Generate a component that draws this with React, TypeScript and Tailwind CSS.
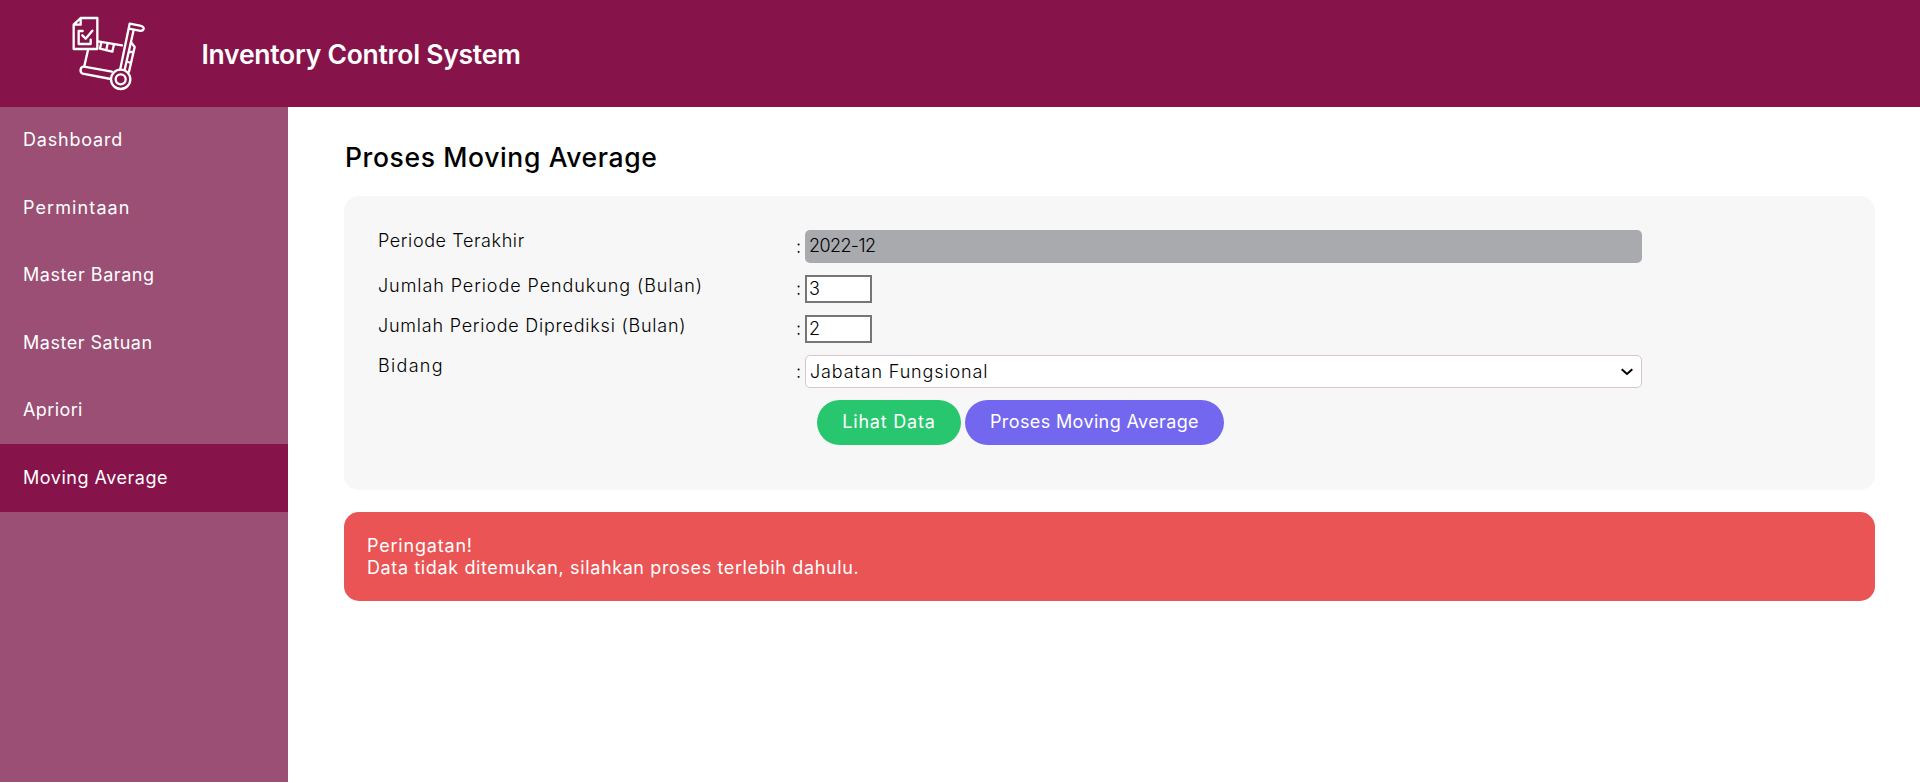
import type { ReactNode } from "react";

const menu = [
  { label: "Dashboard", spacing: "tracking-[0.8px]" },
  { label: "Permintaan", spacing: "tracking-[1.1px]" },
  { label: "Master Barang", spacing: "tracking-[0.56px]" },
  { label: "Master Satuan", spacing: "tracking-[0.52px]" },
  { label: "Apriori", spacing: "tracking-[0.4px]" },
  { label: "Moving Average", spacing: "tracking-[0.52px]", active: true },
];

function TrolleyLogo() {
  return (
    <svg
      viewBox="0 0 300 300"
      className="h-[100px] w-[100px]"
      fill="none"
      stroke="white"
      strokeWidth="7"
      strokeLinejoin="round"
      strokeLinecap="round"
    >
      <path d="M62 39H112V132H41V59ZM41 59H62V39" />
      <path d="M68 78H56V117H92V104M67 91L77 101L97 77" />
      <path d="M114 109L186 121M84 135L73 183" />
      <path d="M124 112L120 131L157 140L162 118M143 115L139 135" />
      <path d="M181 191L209 56L240 62Q253 65 251 72Q248 79 238 77L206 71" />
      <path d="M221 75L194 194" />
      <path d="M213 112L224 126L207 200M209 141H220M204 171L213 174" />
      <path d="M156 200L72 185Q64 184 62 193Q60 203 68 206L152 222" />
      <circle cx="182" cy="223" r="29" />
      <circle cx="182" cy="223" r="15" />
    </svg>
  );
}

function Row({ label, spacing, height, colonTop, children }: {
  label: string; spacing: string; height: string; colonTop: string; children: ReactNode;
}) {
  return (
    <div className={`flex items-start ${height}`}>
      <div className={`w-[418px] whitespace-nowrap font-light ${spacing}`}>{label}</div>
      <div className={`w-[9px] font-light ${colonTop}`}>:</div>
      {children}
    </div>
  );
}

export default function App() {
  return (
    <div className="flex h-[783px] flex-col overflow-hidden bg-white font-['Inter',sans-serif] text-[18px] leading-[22px] text-black">
      <header className="flex h-[107px] shrink-0 items-start bg-[#86134a] pl-[60px] pt-[5px] text-white">
        <TrolleyLogo />
        <h1 className="ml-[41.5px] mt-[33px] whitespace-nowrap text-[26.5px] font-semibold leading-8 tracking-[-0.26px]">
          Inventory Control System
        </h1>
      </header>

      <div className="flex min-h-0 flex-1">
        <nav className="mb-px w-72 shrink-0 bg-[#9b4f74] text-white">
          {menu.map((m) => (
            <a
              key={m.label}
              className={`flex h-[67.47px] items-center pb-px pl-[23px] ${m.spacing} ${m.active ? "bg-[#86134a]" : ""}`}
            >
              {m.label}
            </a>
          ))}
        </nav>

        <main className="min-w-0 flex-1 pl-14 pr-[45px] pt-[33px]">
          <h2 className="pl-px text-[26.5px] font-medium leading-[34px] tracking-[0.62px]">Proses Moving Average</h2>

          <section className="mt-[22px] h-[294px] rounded-[15px] bg-[#f7f7f7] pl-[34px] pt-[34px]">
            <Row label="Periode Terakhir" spacing="tracking-[0.6px]" height="h-[45px]" colonTop="pt-[6px]">
              <div className="flex h-[33px] w-[837px] items-center rounded-[5px] bg-[#a9aaae] pb-px pl-1 font-light tracking-[-0.6px]">
                2022-12
              </div>
            </Row>
            <Row label="Jumlah Periode Pendukung (Bulan)" spacing="tracking-[0.92px]" height="h-10" colonTop="pt-[3px]">
              <div className="flex h-7 w-[67px] items-center border-2 border-[#767676] bg-white pl-[2px] font-light">3</div>
            </Row>
            <Row label="Jumlah Periode Diprediksi (Bulan)" spacing="tracking-[0.77px]" height="h-10" colonTop="pt-[3px]">
              <div className="flex h-7 w-[67px] items-center border-2 border-[#767676] bg-white pl-[2px] font-light">2</div>
            </Row>
            <Row label="Bidang" spacing="tracking-[1.3px]" height="h-[45px]" colonTop="pt-[6px]">
              <div className="flex h-[33px] w-[837px] items-center justify-between rounded-[5px] border border-[#d9c5d1] bg-white pl-1 pr-2 font-light tracking-[0.85px]">
                Jabatan Fungsional
                <svg viewBox="0 0 12 8" className="h-2 w-3" fill="none" stroke="black" strokeWidth="2">
                  <path d="M0.7 1.2L6 6L11.3 1.2" />
                </svg>
              </div>
            </Row>
            <div className="ml-[439px] flex gap-1 text-white">
              <button className="h-[45px] w-36 rounded-full bg-[#28c76f] pb-0.5 tracking-[0.8px]">Lihat Data</button>
              <button className="h-[45px] w-[259px] rounded-full bg-[#7367f0] pb-0.5 tracking-[0.376px]">
                Proses Moving Average
              </button>
            </div>
          </section>

          <section className="mt-[22px] h-[89px] rounded-[15px] bg-[#ea5455] pl-[23px] pt-[23px] text-white">
            <p className="tracking-[0.8px]">Peringatan!</p>
            <p className="tracking-[0.62px]">Data tidak ditemukan, silahkan proses terlebih dahulu.</p>
          </section>
        </main>
      </div>
    </div>
  );
}
